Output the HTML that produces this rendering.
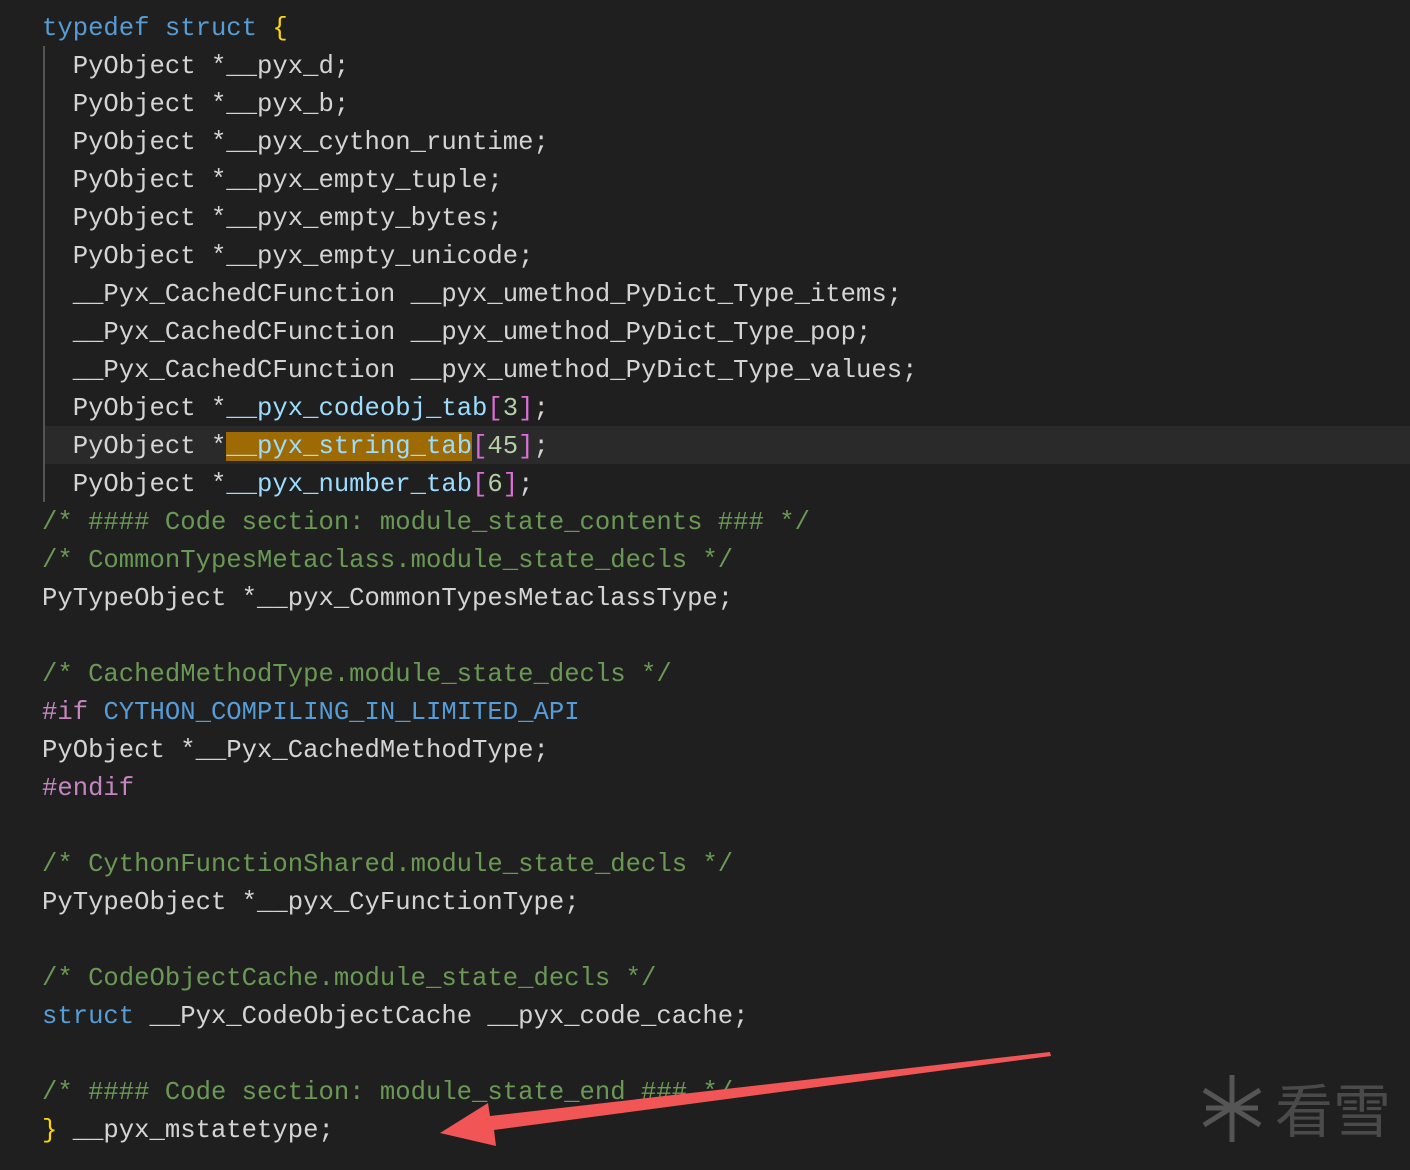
<!DOCTYPE html><html><head><style>
body{margin:0;width:1410px;height:1170px;background:#1f1f1f;overflow:hidden;position:relative}
pre{margin:0;position:absolute;left:42px;top:10px;font-family:"Liberation Mono",monospace;font-size:25.6px;line-height:38px;color:#d4d4d4;white-space:pre}
.k{color:#569cd6}.c{color:#6a9955}.v{color:#9cdcfe}.b{color:#da70d6}.n{color:#b5cea8}.p{color:#c586c0}.y{color:#ffd700}
.h{background:#9e6a03}
</style></head><body>
<div style="position:absolute;left:44px;top:426px;width:1366px;height:38px;background:#2a2a2a"></div>
<div style="position:absolute;left:43px;top:46px;width:2px;height:456px;background:#555"></div>
<pre><span class="k">typedef</span> <span class="k">struct</span> <span class="y">{</span>
  PyObject *__pyx_d;
  PyObject *__pyx_b;
  PyObject *__pyx_cython_runtime;
  PyObject *__pyx_empty_tuple;
  PyObject *__pyx_empty_bytes;
  PyObject *__pyx_empty_unicode;
  __Pyx_CachedCFunction __pyx_umethod_PyDict_Type_items;
  __Pyx_CachedCFunction __pyx_umethod_PyDict_Type_pop;
  __Pyx_CachedCFunction __pyx_umethod_PyDict_Type_values;
  PyObject *<span class="v">__pyx_codeobj_tab</span><span class="b">[</span><span class="n">3</span><span class="b">]</span>;
  PyObject *<span class="v h">__pyx_string_tab</span><span class="b">[</span><span class="n">45</span><span class="b">]</span>;
  PyObject *<span class="v">__pyx_number_tab</span><span class="b">[</span><span class="n">6</span><span class="b">]</span>;
<span class="c">/* #### Code section: module_state_contents ### */</span>
<span class="c">/* CommonTypesMetaclass.module_state_decls */</span>
PyTypeObject *__pyx_CommonTypesMetaclassType;

<span class="c">/* CachedMethodType.module_state_decls */</span>
<span class="p">#if</span> <span class="k">CYTHON_COMPILING_IN_LIMITED_API</span>
PyObject *__Pyx_CachedMethodType;
<span class="p">#endif</span>

<span class="c">/* CythonFunctionShared.module_state_decls */</span>
PyTypeObject *__pyx_CyFunctionType;

<span class="c">/* CodeObjectCache.module_state_decls */</span>
<span class="k">struct</span> __Pyx_CodeObjectCache __pyx_code_cache;

<span class="c">/* #### Code section: module_state_end ### */</span>
<span class="y">}</span> __pyx_mstatetype;</pre>
<svg style="position:absolute;left:0;top:0" width="1410" height="1170">
<polygon points="1050,1052 1051,1056 494,1130 496,1146 440,1133 488,1103 490,1116" fill="#f25555"/>
<g stroke="#555" stroke-width="5" fill="none"><line x1="1232" y1="1075" x2="1232" y2="1142"/><line x1="1204" y1="1090" x2="1260" y2="1125"/><line x1="1204" y1="1125" x2="1260" y2="1090"/><line x1="1206" y1="1108" x2="1258" y2="1108"/></g>
<text x="1275" y="1132" font-family="Noto Sans CJK SC,sans-serif" font-size="58" fill="#4a4a4a">看雪</text>
</svg>
</body></html>
